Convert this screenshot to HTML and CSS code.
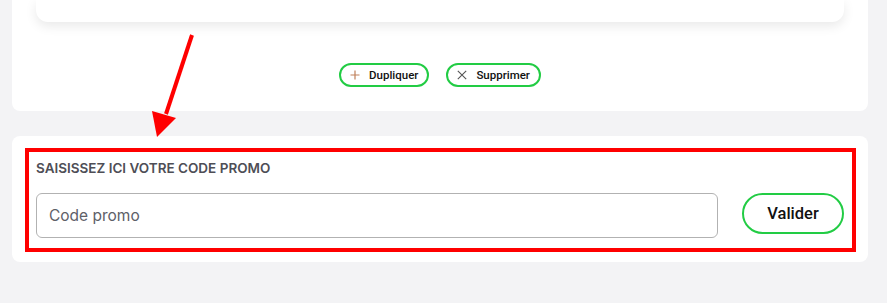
FILE: index.html
```html
<!DOCTYPE html>
<html lang="fr">
<head>
<meta charset="UTF-8">
<meta name="viewport" content="width=device-width, initial-scale=1.0">
<title>Panier - code promo</title>
<link rel="stylesheet" href="styles.css">
</head>
<body>
  <div class="panel panel-top">
    <div class="item-card"></div>
    <div class="item-actions">
      <button class="pill">
        <svg width="10" height="10" viewBox="0 0 10 10"><path d="M5 0.5V9.5M0.5 5H9.5" stroke="#c0805a" stroke-width="1.2"/></svg>
        Dupliquer
      </button>
      <button class="pill">
        <svg width="10" height="10" viewBox="0 0 10 10"><path d="M0.8 0.8L9.2 9.2M9.2 0.8L0.8 9.2" stroke="#555" stroke-width="1.1"/></svg>
        Supprimer
      </button>
    </div>
  </div>

  <div class="panel panel-promo">
    <div class="highlight">
      <label class="promo-label" for="promo">Saisissez ici votre code promo</label>
      <div class="promo-row">
        <input id="promo" class="promo-input" type="text" placeholder="Code promo">
        <button class="btn-valider">Valider</button>
      </div>
    </div>
  </div>

  <svg class="arrow" width="887" height="303" viewBox="0 0 887 303">
    <line x1="192" y1="35" x2="166" y2="114" stroke="#ff0000" stroke-width="4"/>
    <polygon points="157,137 152,111 176,118" fill="#ff0000"/>
  </svg>
</body>
</html>
```

FILE: styles.css
```css
body {
  margin: 0;
  background: #f3f3f5;
  font-family: Inter, "Noto Sans", sans-serif;
  width: 887px;
  height: 303px;
  overflow: hidden;
  position: relative;
}

.panel {
  background: #ffffff;
  margin: 0 19px 0 12px;
  border-radius: 8px;
}

.panel-top {
  height: 111px;
  border-radius: 0 0 8px 8px;
  overflow: hidden;
}

.item-card {
  margin: 0 24px;
  height: 22px;
  background: #fff;
  border-radius: 0 0 12px 12px;
  box-shadow: 0 4px 12px rgba(0, 0, 0, 0.09);
}

.item-actions {
  display: flex;
  justify-content: center;
  gap: 17px;
  margin-top: 41px;
}

.pill {
  display: flex;
  align-items: center;
  gap: 9px;
  height: 24px;
  padding: 0 9px 0 9px;
  background: #fff;
  border: 2px solid #22cc44;
  border-radius: 12px;
  font-family: Roboto, sans-serif;
  font-size: 11.5px;
  font-weight: 500;
  color: #111;
}

.panel-promo {
  margin-top: 25px;
  height: 126px;
  padding: 12px 12px 0 13px;
  box-sizing: border-box;
}

.highlight {
  border: 4px solid #ff0000;
  height: 104px;
  box-sizing: border-box;
  padding: 8px 8px 0 7px;
}

.promo-label {
  display: block;
  font-size: 13.5px;
  font-weight: 600;
  color: #4e4e56;
  text-transform: uppercase;
  line-height: 16px;
}

.promo-row {
  display: flex;
  align-items: flex-start;
  gap: 24px;
  margin-top: 17px;
}

.promo-input {
  flex: 1;
  height: 45px;
  box-sizing: border-box;
  border: 1px solid #b2b2b2;
  border-radius: 6px;
  padding: 0 12px;
  font-family: Inter, sans-serif;
  font-size: 15.5px;
}

.promo-input::placeholder {
  color: #5e6068;
}

.btn-valider {
  width: 102px;
  height: 41px;
  background: #fff;
  border: 2px solid #22cc44;
  border-radius: 21px;
  font-family: Roboto, sans-serif;
  font-size: 16.5px;
  font-weight: 500;
  color: #111;
}

.arrow {
  position: absolute;
  left: 0;
  top: 0;
  pointer-events: none;
}
```
